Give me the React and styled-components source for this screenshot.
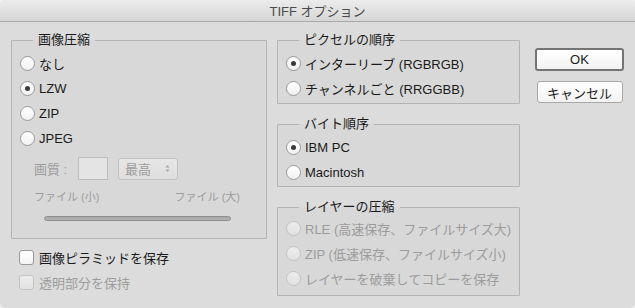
import React from 'react';
import styled, { createGlobalStyle } from 'styled-components';

const GlobalStyle = createGlobalStyle`
  html, body {
    margin: 0;
    padding: 0;
    background: #f2f2f2;
  }
  body {
    font-family: "Liberation Sans", "Noto Sans CJK JP", sans-serif;
    font-size: 13px;
    color: #1a1a1a;
  }
`;

const Window = styled.div`
  width: 635px;
  height: 308px;
  background: #dcdcdc;
  border-radius: 5px;
  overflow: hidden;
  display: flex;
  flex-direction: column;
`;

const TitleBar = styled.div`
  height: 21px;
  flex: none;
  display: flex;
  align-items: center;
  justify-content: center;
  background: linear-gradient(#ececec, #d6d6d6);
  border-bottom: 1px solid #a9a9a9;
  color: #4a4a4a;
  font-size: 13px;
`;

const Body = styled.div`
  display: flex;
  padding: 10px 0 0 11px;
`;

const Column = styled.div`
  display: flex;
  flex-direction: column;
  width: ${({ $width }) => $width}px;
  margin-right: ${({ $gap }) => $gap || 0}px;
`;

// group box with its title sitting on the top border
const Group = styled.fieldset`
  margin: 0 0 ${({ $after }) => $after || 0}px;
  padding: ${({ $pt }) => $pt}px 0 ${({ $pb }) => $pb}px 8px;
  border: 1px solid #b4b4b4;
  border-radius: 1px;
  background: rgba(0, 0, 0, 0.015);
  min-width: 0;
  display: flex;
  flex-direction: column;
`;

const Legend = styled.legend`
  margin-left: 13px;
  padding: 0 5px;
  line-height: 16px;
  font-size: 13px;
  color: #1a1a1a;
`;

const OptionRow = styled.label`
  height: 25px;
  display: flex;
  align-items: center;
  gap: 4px;
  color: ${({ $disabled }) => ($disabled ? '#9c9c9c' : '#1a1a1a')};
  white-space: nowrap;
`;

const Radio = styled.span`
  width: 13px;
  height: 13px;
  flex: none;
  border-radius: 50%;
  border: 1px solid ${({ $disabled }) => ($disabled ? '#c2c2c2' : '#9a9a9a')};
  background: ${({ $disabled }) =>
    $disabled ? 'linear-gradient(#ececec, #e2e2e2)' : 'linear-gradient(#ffffff, #f1f1f1)'};
  display: flex;
  align-items: center;
  justify-content: center;

  &::after {
    content: '';
    width: 5px;
    height: 5px;
    border-radius: 50%;
    background: #3a3a3a;
    display: ${({ $checked }) => ($checked ? 'block' : 'none')};
  }
`;

const Checkbox = styled.span`
  width: 13px;
  height: 13px;
  flex: none;
  border-radius: 3px;
  border: 1px solid ${({ $disabled }) => ($disabled ? '#c4c4c4' : '#9a9a9a')};
  background: ${({ $disabled }) =>
    $disabled ? 'linear-gradient(#ececec, #e2e2e2)' : 'linear-gradient(#ffffff, #f3f3f3)'};
`;

const CheckRow = styled(OptionRow)`
  margin-left: 8px;
  gap: 5px;
`;

const QualityRow = styled.div`
  display: flex;
  align-items: center;
  margin: 6px 0 0 14px;
  height: 23px;
  color: #9c9c9c;
`;

const QualityLabel = styled.span`
  width: 44px;
`;

const QualityInput = styled.span`
  width: 28px;
  height: 21px;
  border: 1px solid #bdbdbd;
  background: #e4e4e4;
  margin-right: 10px;
`;

const Select = styled.span`
  width: 45px;
  height: 20px;
  border: 1px solid #c2c2c2;
  border-radius: 3px;
  background: linear-gradient(#e6e6e6, #dedede);
  display: flex;
  align-items: center;
  justify-content: space-between;
  padding: 0 7px 0 6px;
`;

const SizeLabels = styled.div`
  display: flex;
  justify-content: space-between;
  margin: 9px 0 0 14px;
  width: 206px;
  font-size: 11px;
  line-height: 16px;
  color: #9c9c9c;
`;

const Track = styled.div`
  margin: 11px 0 0 24px;
  width: 185px;
  height: 3px;
  border-radius: 3px;
  border: 1px solid #8e8e8e;
  background: linear-gradient(#a6a6a6, #b4b4b4);
`;

const Buttons = styled.div`
  display: flex;
  flex-direction: column;
  align-items: center;
  width: 89px;
  margin-top: 16px;
  gap: 10px;
`;

const Button = styled.button`
  font-family: inherit;
  font-size: 13px;
  color: #1a1a1a;
  width: ${({ $primary }) => ($primary ? 89 : 86)}px;
  height: ${({ $primary }) => ($primary ? 23 : 22)}px;
  padding: 0;
  border-radius: 3px;
  border: ${({ $primary }) => ($primary ? '2px solid #747474' : '1px solid #a8a8a8')};
  background: linear-gradient(#ffffff, #f2f2f2);
  display: flex;
  align-items: center;
  justify-content: center;
`;

const Arrows = () => (
  <svg width="5" height="9" viewBox="0 0 5 9">
    <path d="M0.5 3.5 L2.5 1 L4.5 3.5 Z M0.5 5.5 L2.5 8 L4.5 5.5 Z" fill="#a8a8a8" />
  </svg>
);

const RadioOption = ({ label, checked, disabled }) => (
  <OptionRow $disabled={disabled}>
    <Radio $checked={checked} $disabled={disabled} />
    {label}
  </OptionRow>
);

export default function App() {
  return (
    <>
      <GlobalStyle />
      <Window>
        <TitleBar>TIFF オプション</TitleBar>
        <Body>
          <Column $width={256} $gap={10}>
            <Group $pt={3} $pb={17} $after={6}>
              <Legend>画像圧縮</Legend>
              <RadioOption label="なし" />
              <RadioOption label="LZW" checked />
              <RadioOption label="ZIP" />
              <RadioOption label="JPEG" />
              <QualityRow>
                <QualityLabel>画質 :</QualityLabel>
                <QualityInput />
                <Select>
                  最高
                  <Arrows />
                </Select>
              </QualityRow>
              <SizeLabels>
                <span>ファイル (小)</span>
                <span>ファイル (大)</span>
              </SizeLabels>
              <Track />
            </Group>
            <CheckRow>
              <Checkbox />
              画像ピラミッドを保存
            </CheckRow>
            <CheckRow $disabled>
              <Checkbox $disabled />
              透明部分を保持
            </CheckRow>
          </Column>

          <Column $width={243} $gap={15}>
            <Group $pt={3} $pb={2} $after={12}>
              <Legend>ピクセルの順序</Legend>
              <RadioOption label="インターリーブ (RGBRGB)" checked />
              <RadioOption label="チャンネルごと (RRGGBB)" />
            </Group>
            <Group $pt={3} $pb={1} $after={12}>
              <Legend>バイト順序</Legend>
              <RadioOption label="IBM PC" checked />
              <RadioOption label="Macintosh" />
            </Group>
            <Group $pt={1} $pb={4}>
              <Legend>レイヤーの圧縮</Legend>
              <RadioOption label="RLE (高速保存、ファイルサイズ大)" disabled />
              <RadioOption label="ZIP (低速保存、ファイルサイズ小)" disabled />
              <RadioOption label="レイヤーを破棄してコピーを保存" disabled />
            </Group>
          </Column>

          <Buttons>
            <Button $primary>OK</Button>
            <Button>キャンセル</Button>
          </Buttons>
        </Body>
      </Window>
    </>
  );
}
